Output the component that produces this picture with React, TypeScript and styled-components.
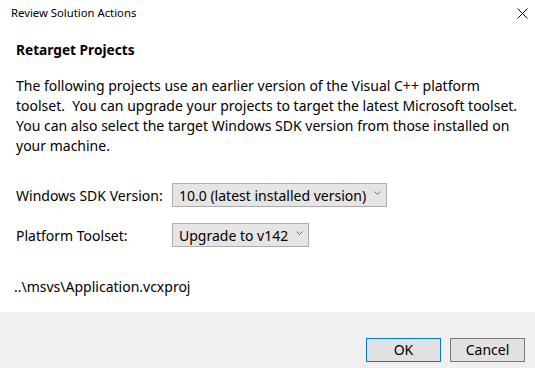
import styled, { createGlobalStyle } from "styled-components";

const GlobalStyle = createGlobalStyle`
  html, body {
    margin: 0;
    padding: 0;
    background: #ffffff;
  }
  body {
    font-family: "Noto Sans", "Open Sans", sans-serif;
    color: #000000;
  }
`;

const Dialog = styled.div`
  width: 535px;
  height: 368px;
  display: flex;
  flex-direction: column;
  background: #ffffff;
  overflow: hidden;
`;

const TitleBar = styled.div`
  height: 30px;
  flex-shrink: 0;
  display: flex;
  align-items: center;
  justify-content: space-between;
  padding: 0 0 0 11px;
`;

const TitleText = styled.span`
  font-size: 11.3px;
  margin-top: -5px;
`;

const CloseButton = styled.button`
  width: 26px;
  height: 26px;
  border: none;
  background: transparent;
  display: flex;
  align-items: center;
  justify-content: center;
  padding: 0;
  margin-top: -4px;
`;

const Body = styled.div`
  flex: 1;
  display: flex;
  flex-direction: column;
  padding: 10px 16px 0 16px;
`;

const Heading = styled.h1`
  font-size: 13.7px;
  font-weight: 700;
  margin: 0 0 16px 0;
  line-height: 20px;
`;

const Paragraph = styled.p`
  margin: 0 0 27px 0;
  font-size: 14px;
  line-height: 20px;
`;

const Line = styled.span`
  display: block;
  white-space: pre;
`;

const FieldGrid = styled.div`
  display: grid;
  grid-template-columns: 156px auto;
  row-gap: 16px;
  align-items: center;
  justify-items: start;
  margin-bottom: 30px;
`;

const Label = styled.label`
  font-size: 14px;
`;

const Combo = styled.div`
  height: 22px;
  display: flex;
  align-items: center;
  gap: 8px;
  padding: 0 5px 0 6px;
  background: #e5e5e5;
  border: 1px solid #adadad;
  font-size: 14px;
`;

const Chevron = styled.svg`
  width: 7px;
  height: 4px;
  align-self: flex-start;
  margin-top: 7px;
`;

const FilePath = styled.div`
  font-size: 14px;
  line-height: 20px;
  margin-left: -2px;
`;

const Footer = styled.div`
  height: 56px;
  flex-shrink: 0;
  background: #f0f0f0;
  display: flex;
  justify-content: flex-end;
  align-items: flex-end;
  gap: 9px;
  padding: 0 10px 6px 0;
  box-sizing: border-box;
`;

const Button = styled.button<{ primary?: boolean }>`
  width: 75px;
  height: 24px;
  background: #e1e1e1;
  border: 1px solid ${({ primary }) => (primary ? "#0078d7" : "#7a7a7a")};
  font-family: inherit;
  font-size: 14px;
  color: #000;
  padding: 0;
  line-height: 20px;
`;

const ComboBox = ({ value }: { value: string }) => (
  <Combo>
    <span>{value}</span>
    <Chevron viewBox="0 0 7 4">
      <path d="M0.5 0.5 L3.5 3.5 L6.5 0.5" fill="none" stroke="#707070" strokeWidth="1" />
    </Chevron>
  </Combo>
);

export default function App() {
  return (
    <>
      <GlobalStyle />
      <Dialog>
        <TitleBar>
          <TitleText>Review Solution Actions</TitleText>
          <CloseButton aria-label="Close">
            <svg width="11" height="11" viewBox="0 0 11 11">
              <path d="M0.5 0.5 L10.5 10.5 M10.5 0.5 L0.5 10.5" stroke="#000" strokeWidth="1" />
            </svg>
          </CloseButton>
        </TitleBar>
        <Body>
          <Heading>Retarget Projects</Heading>
          <Paragraph>
            <Line>The following projects use an earlier version of the Visual C++ platform</Line>
            <Line>toolset.  You can upgrade your projects to target the latest Microsoft toolset.</Line>
            <Line>You can also select the target Windows SDK version from those installed on</Line>
            <Line>your machine.</Line>
          </Paragraph>
          <FieldGrid>
            <Label>Windows SDK Version:</Label>
            <ComboBox value="10.0 (latest installed version)" />
            <Label>Platform Toolset:</Label>
            <ComboBox value="Upgrade to v142" />
          </FieldGrid>
          <FilePath>..\msvs\Application.vcxproj</FilePath>
        </Body>
        <Footer>
          <Button primary>OK</Button>
          <Button>Cancel</Button>
        </Footer>
      </Dialog>
    </>
  );
}
